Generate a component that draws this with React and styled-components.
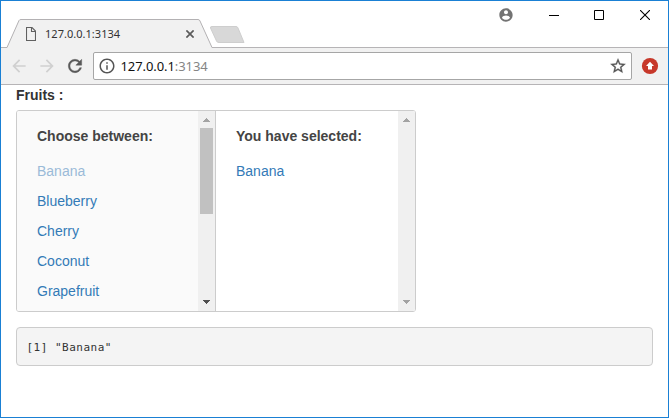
import React from "react";
import styled, { createGlobalStyle } from "styled-components";

const GlobalStyle = createGlobalStyle`
  * { box-sizing: border-box; }
  html, body { margin: 0; padding: 0; background: #fff; overflow: hidden; }
`;

const Window = styled.div`
  width: 669px;
  height: 418px;
  border: 1px solid #1a80d4;
  background: #fff;
  font-family: "Liberation Sans", Arial, sans-serif;
  font-size: 14px;
  color: #333;
  overflow: hidden;
`;

const TabStrip = styled.div`
  display: flex;
  height: 47px;
  justify-content: space-between;
  border-bottom: 1px solid #b6b4b6;
`;

const Tab = styled.div`
  position: relative;
  display: flex;
  align-items: center;
  width: 214px;
  height: 29px;
  margin: 18px 0 -1px 5px;
  padding: 0 0 0 20px;
  font-family: "Noto Sans", sans-serif;
  font-size: 11px;
  line-height: 15px;
  color: #333;
`;

const TabShape = styled.svg`
  position: absolute;
  left: 0;
  top: 0;
  width: 245px;
  height: 29px;
`;

const TabTitle = styled.span`
  position: relative;
  flex: 1;
  margin-left: 9px;
  letter-spacing: 0.03px;
`;

const Icon = styled.svg`
  position: relative;
  display: block;
  flex: none;
  width: ${(p) => p.$w}px;
  height: ${(p) => p.$h || p.$w}px;
`;

const TabClose = styled(Icon)`
  margin-right: 26px;
`;

const Controls = styled.div`
  display: flex;
  align-items: center;
  height: 28px;
  padding-right: 18px;
`;

const Control = styled.div`
  margin-left: ${(p) => p.$gap}px;
`;

const Toolbar = styled.div`
  display: flex;
  align-items: center;
  height: 37px;
  padding: 0 9px 0 8px;
  background: #f1f1f1;
  border-bottom: 1px solid #b6b4b6;
`;

const Navigation = styled.div`
  display: flex;
  flex: none;
  gap: 8px;
  width: 84px;
`;

const AddressBar = styled.div`
  display: flex;
  flex: none;
  align-items: center;
  width: 539px;
  height: 28px;
  margin-right: 9px;
  padding: 0 4px;
  border: 1px solid #a6a6a6;
  border-radius: 2px;
  background: #fff;
`;

const Address = styled.span`
  flex: 1;
  margin-left: 4.5px;
  font-family: "Noto Sans", sans-serif;
  font-size: 13px;
  line-height: 18px;
  letter-spacing: -0.08px;
  color: #111;
`;

const Port = styled.span`
  color: #858585;
`;

const Page = styled.main`
  padding: 0 15px;
`;

const Label = styled.div`
  height: 25px;
  line-height: 20px;
  font-weight: 700;
`;

const MultiSelect = styled.div`
  display: flex;
  width: 400px;
  height: 202px;
  border: 1px solid #ccc;
  border-radius: 3px;
  overflow: hidden;
`;

const Column = styled.section`
  display: flex;
  flex: none;
  width: 199px;
`;

const SourceColumn = styled(Column)`
  background: #fafafa;
  border-right: 1px solid #ccc;
`;

const SelectedColumn = styled(Column)`
  background: #fff;
`;

const Options = styled.div`
  flex: 1;
  padding: 15px 0 0 20px;
`;

const Heading = styled.div`
  height: 30px;
  line-height: 20px;
  font-weight: 700;
  color: #444;
  white-space: nowrap;
`;

const Option = styled.div`
  height: 30px;
  line-height: 30px;
  color: ${(p) => (p.$chosen ? "#9abad8" : "#337ab7")};
`;

const Scrollbar = styled.div`
  display: flex;
  flex-direction: column;
  align-items: center;
  width: 17px;
  height: 200px;
  background: #f0f0f0;
`;

const Arrow = styled.svg`
  display: block;
  flex: none;
  width: 17px;
  height: 17px;
  color: ${(p) => (p.$active ? "#505050" : "#a3a3a3")};
`;

const Track = styled.div`
  flex: 1;
`;

const Thumb = styled.div`
  width: 13px;
  height: 86px;
  background: #c1c1c1;
`;

const Output = styled.pre`
  width: 637px;
  height: 39px;
  margin: 15px 0 0;
  padding: 11px 9.5px 8px;
  border: 1px solid #ccc;
  border-radius: 4px;
  background: #f4f4f4;
  font-family: "DejaVu Sans Mono", monospace;
  font-size: 11px;
  letter-spacing: 0.5px;
  line-height: 18px;
  color: #333;
`;

function ScrollRail({ thumb }) {
  return (
    <Scrollbar>
      <Arrow viewBox="0 0 17 17" shapeRendering="crispEdges">
        <path d="M8 7h1v1h1v1h1v1h1v1H5v-1h1V9h1V8h1z" fill="currentColor" />
      </Arrow>
      <Track>{thumb && <Thumb />}</Track>
      <Arrow viewBox="0 0 17 17" $active={thumb} shapeRendering="crispEdges">
        <path d="M5 6h7v1h-1v1h-1v1H9v1H8V9H7V8H6V7H5z" fill="currentColor" />
      </Arrow>
    </Scrollbar>
  );
}

const fruits = ["Banana", "Blueberry", "Cherry", "Coconut", "Grapefruit"];

export default function App() {
  return (
    <>
      <GlobalStyle />
      <Window>
        <TabStrip>
          <Tab>
            <TabShape viewBox="0 0 245 29">
              <path d="M0 28.5h1L13 1.5Q13.5.5 15 .5H192Q193.5.5 194 2L206 28.5V29H0z" fill="#f1f1f1" />
              <path d="M0 28.5H1L13 1.5Q13.5.5 15 .5H192Q193.5.5 194 2L206 28.5" fill="none" stroke="#b3b1b3" />
              <path d="M206 7.5H230Q231.5 7.5 232 9L238 23.5H213Q211 23.5 210.5 22L204.5 9Q204 7.5 206 7.5z" fill="#d8d8d8" stroke="#cecece" />
            </TabShape>
            <Icon $w={10} $h={14} viewBox="0 0 10 14">
              <path d="M.5.5H6L9.5 4v9.5H.5zM5.5.5v4h4" fill="none" stroke="#606060" strokeWidth="1.1" />
            </Icon>
            <TabTitle>127.0.0.1:3134</TabTitle>
            <TabClose $w={8} viewBox="0 0 8 8">
              <path d="M.4.4l7.2 7.2M7.6.4L.4 7.6" stroke="#5b5b5b" strokeWidth="1.7" />
            </TabClose>
          </Tab>
          <Controls>
            <Control $gap={0}>
              <Icon $w={16} viewBox="0 0 24 24">
                <path fill="#737373" d="M12 2C6.48 2 2 6.48 2 12s4.48 10 10 10 10-4.48 10-10S17.52 2 12 2zm0 3c1.66 0 3 1.34 3 3s-1.34 3-3 3-3-1.34-3-3 1.34-3 3-3zm0 14.2c-2.5 0-4.71-1.28-6-3.22.03-1.99 4-3.08 6-3.08 1.99 0 5.97 1.09 6 3.08-1.29 1.94-3.5 3.22-6 3.22z" />
              </Icon>
            </Control>
            <Control $gap={35}>
              <Icon $w={10} viewBox="0 0 10 10"><path d="M0 5.5h10" stroke="#000" /></Icon>
            </Control>
            <Control $gap={35}>
              <Icon $w={10} viewBox="0 0 10 10"><path d="M.5.5h9v9h-9z" fill="none" stroke="#000" /></Icon>
            </Control>
            <Control $gap={36}>
              <Icon $w={10} viewBox="0 0 10 10"><path d="M0 0l10 10M10 0L0 10" stroke="#000" strokeWidth="1.1" /></Icon>
            </Control>
          </Controls>
        </TabStrip>
        <Toolbar>
          <Navigation>
            <Icon $w={20} viewBox="0 0 24 24"><path fill="#d0d0d0" d="M20 11H7.83l5.59-5.59L12 4l-8 8 8 8 1.41-1.41L7.83 13H20v-2z" /></Icon>
            <Icon $w={20} viewBox="0 0 24 24"><path fill="#d0d0d0" d="M12 4l-1.41 1.41L16.17 11H4v2h12.17l-5.58 5.59L12 20l8-8z" /></Icon>
            <Icon $w={20} viewBox="0 0 24 24"><path fill="#595959" stroke="#595959" strokeWidth=".5" d="M17.65 6.35C16.2 4.9 14.21 4 12 4c-4.42 0-7.99 3.58-7.99 8s3.57 8 7.99 8c3.73 0 6.84-2.55 7.73-6h-2.08c-.82 2.33-3.04 4-5.65 4-3.31 0-6-2.69-6-6s2.69-6 6-6c1.66 0 3.14.69 4.22 1.78L13 11h7V4l-2.35 2.35z" /></Icon>
          </Navigation>
          <AddressBar>
            <Icon $w={18} viewBox="0 0 24 24"><path fill="#555" d="M11 17h2v-6h-2v6zm1-15C6.48 2 2 6.48 2 12s4.48 10 10 10 10-4.48 10-10S17.52 2 12 2zm0 18c-4.41 0-8-3.59-8-8s3.59-8 8-8 8 3.59 8 8-3.59 8-8 8zM11 9h2V7h-2v2z" /></Icon>
            <Address>127.0.0.1<Port>:3134</Port></Address>
            <Icon $w={18} viewBox="0 0 24 24"><path fill="#555" stroke="#555" strokeWidth=".4" d="M22 9.24l-7.19-.62L12 2 9.19 8.63 2 9.24l5.46 4.73L5.82 21 12 17.27 18.18 21l-1.63-7.03L22 9.24zM12 15.4l-3.76 2.27 1-4.28-3.32-2.88 4.38-.38L12 6.1l1.71 4.04 4.38.38-3.32 2.88 1 4.28L12 15.4z" /></Icon>
          </AddressBar>
          <Icon $w={18} viewBox="0 0 18 18">
            <circle cx="9" cy="9" r="8.1" fill="#c7382a" />
            <path d="M9 4.7l4 4.3h-2v3.5H7V9H5z" fill="#fff" />
          </Icon>
        </Toolbar>
        <Page>
          <Label>Fruits :</Label>
          <MultiSelect>
            <SourceColumn>
              <Options>
                <Heading>Choose between:</Heading>
                {fruits.map((fruit) => (
                  <Option key={fruit} $chosen={fruit === "Banana"}>{fruit}</Option>
                ))}
              </Options>
              <ScrollRail thumb />
            </SourceColumn>
            <SelectedColumn>
              <Options>
                <Heading>You have selected:</Heading>
                <Option>Banana</Option>
              </Options>
              <ScrollRail />
            </SelectedColumn>
          </MultiSelect>
          <Output>[1] "Banana"</Output>
        </Page>
      </Window>
    </>
  );
}
